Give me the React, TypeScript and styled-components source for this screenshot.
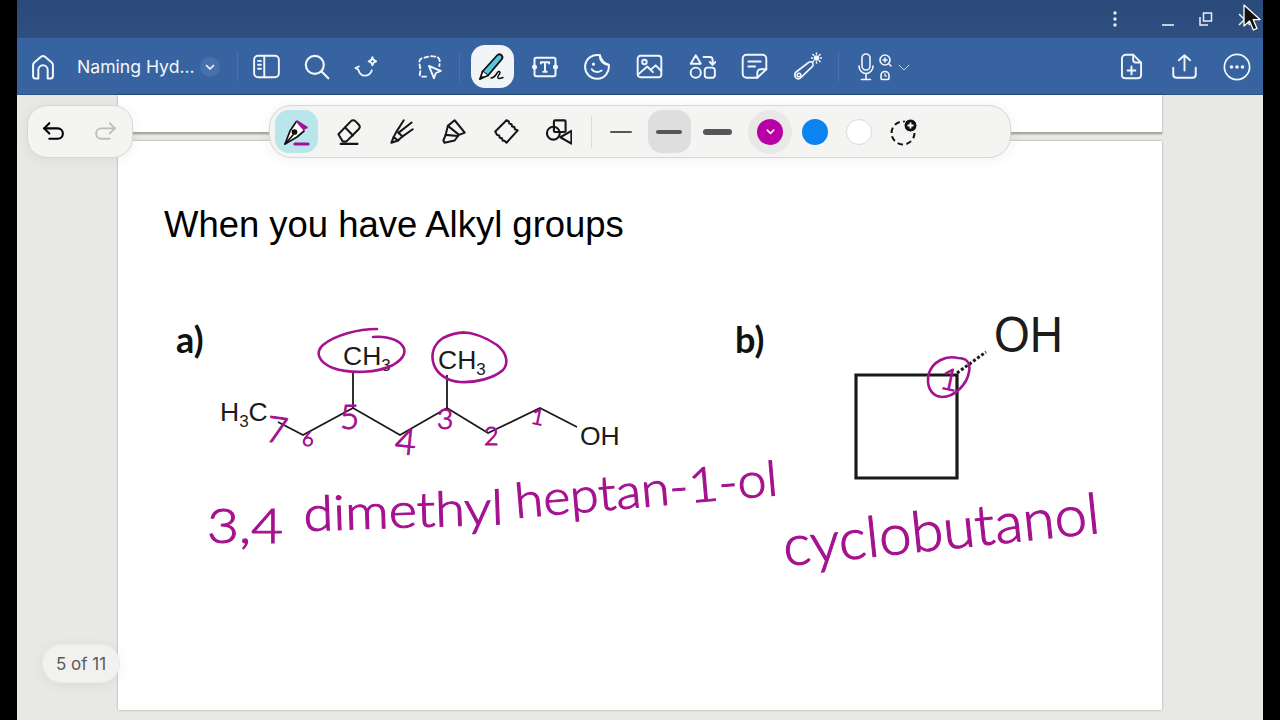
import React from "react";
import styled, { createGlobalStyle } from "styled-components";

const Global = createGlobalStyle`
  html, body {
    margin: 0;
    height: 100%;
    background: #000;
    overflow: hidden;
    font-family: "Inter", "Liberation Sans", sans-serif;
  }
`;

const Stage = styled.div`
  width: 1280px;
  height: 720px;
  padding: 0 17px;
  box-sizing: border-box;
  position: relative;
`;

const Win = styled.div`
  height: 720px;
  display: flex;
  flex-direction: column;
`;

const TitleBar = styled.div`
  height: 38px;
  flex: none;
  display: flex;
  align-items: center;
  justify-content: flex-end;
  background: linear-gradient(#2a4a79, #2e4f80);
  color: #e8eef7;
`;

const WinButton = styled.div<{ $w: number }>`
  width: ${({ $w }) => $w}px;
  height: 38px;
  display: flex;
  align-items: center;
  justify-content: center;
`;

const Toolbar = styled.div`
  height: 57px;
  flex: none;
  box-sizing: border-box;
  padding-top: 1px;
  display: flex;
  align-items: center;
  background: #3764a0;
  border-bottom: 1px solid #2c5285;
  color: #f2f6fb;
`;

const BarButton = styled.div<{ $w?: number; $ml?: number }>`
  width: ${({ $w }) => $w ?? 52.5}px;
  margin-left: ${({ $ml }) => $ml ?? 0}px;
  height: 43px;
  flex: none;
  display: flex;
  align-items: center;
  justify-content: center;
`;

const ActiveTile = styled.div`
  width: 43px;
  height: 43px;
  border-radius: 14px;
  background: #f1f5f8;
  display: flex;
  align-items: center;
  justify-content: center;
`;

const DocTitle = styled.div`
  width: 154px;
  flex: none;
  padding: 0 3px 0 8px;
  box-sizing: border-box;
  display: flex;
  align-items: center;
  justify-content: space-between;
  font-size: 17.6px;
  font-weight: 400;
  white-space: nowrap;
`;

const ChevronBadge = styled.div`
  width: 20px;
  height: 20px;
  border-radius: 50%;
  background: #4671aa;
  display: flex;
  align-items: center;
  justify-content: center;
`;

const BarDivider = styled.div<{ $ml: number }>`
  width: 1px;
  height: 30px;
  flex: none;
  margin-left: ${({ $ml }) => $ml}px;
  background: #4873aa;
`;

const VoiceGroup = styled.div`
  margin-left: 19px;
  display: flex;
  align-items: center;
  gap: 4px;
`;

const RightGroup = styled.div`
  margin-left: auto;
  display: flex;
`;

const Canvas = styled.div`
  flex: 1;
  display: flex;
  flex-direction: column;
  background: #e8e8e4;
  position: relative;
  min-height: 0;
`;

const PageStub = styled.div`
  width: 1044px;
  height: 39px;
  margin-left: 101px;
  flex: none;
  background: #fff;
  border-bottom: 2px solid #a9a9a7;
  box-sizing: border-box;
  box-shadow: 0 0 2px rgba(0, 0, 0, 0.35);
`;

const Page = styled.div`
  width: 1044px;
  height: 569px;
  margin: 7px 0 0 101px;
  flex: none;
  background: #fff;
  box-shadow: 0 0 2px rgba(0, 0, 0, 0.35);
  position: relative;
  box-sizing: border-box;
  padding: 62px 0 0 46px;
`;

const Heading = styled.h1`
  margin: 0;
  font: 400 36.45px/44px "Liberation Sans", Arial, sans-serif;
  color: #000;
`;

const Drawing = styled.svg`
  position: absolute;
  inset: 0;
  width: 1044px;
  height: 569px;
`;

const Formula = styled.text<{ $size: number }>`
  font-family: "Liberation Sans", Arial, sans-serif;
  font-size: ${({ $size }) => $size}px;
  fill: #1c1c1c;
`;

const Label = styled.text`
  font-family: "Lato", "Liberation Sans", sans-serif;
  font-size: 36px;
  font-weight: 700;
  fill: #111;
`;

const Ink = styled.text<{ $size: number }>`
  font-family: "Lato", "Noto Sans", sans-serif;
  font-weight: 300;
  font-size: ${({ $size }) => $size}px;
  fill: #a5128f;
  stroke: #a5128f;
  stroke-width: 1.1px;
`;

const InkLine = styled.path`
  fill: none;
  stroke: #a5128f;
  stroke-width: 2.6;
  stroke-linecap: round;
  stroke-linejoin: round;
`;

const Bond = styled.path<{ $w?: number }>`
  fill: none;
  stroke: #1a1a1a;
  stroke-width: ${({ $w }) => $w ?? 1.8};
`;

const Floating = styled.div`
  position: absolute;
  background: #f4f4f3;
  border: 1px solid #d6d6d4;
  box-sizing: border-box;
  box-shadow: 0 2px 14px rgba(0, 0, 0, 0.06);
`;

const UndoPill = styled(Floating)`
  left: 10px;
  top: 10px;
  width: 106px;
  height: 53px;
  border-radius: 20px;
  display: flex;
  align-items: center;
  justify-content: space-between;
  padding: 0 14px 0 13px;
`;

const RedoArrow = styled.span`
  color: #bdbdbb;
  display: flex;
`;

const Palette = styled(Floating)`
  left: 252px;
  top: 10px;
  width: 742px;
  height: 53px;
  border-radius: 22px;
  display: flex;
  align-items: center;
  padding-left: 5px;
  color: #161616;
`;

const ToolRow = styled.div`
  display: flex;
  gap: 9.4px;
`;

const ToolTile = styled.div<{ $active?: boolean }>`
  width: 43px;
  height: 43px;
  border-radius: 14px;
  background: ${({ $active }) => ($active ? "#b9e6eb" : "transparent")};
  display: flex;
  align-items: center;
  justify-content: center;
`;

const PaletteDivider = styled.div`
  width: 1px;
  height: 32px;
  margin-left: 11px;
  background: #dcdcda;
`;

const WidthRow = styled.div`
  margin-left: 8px;
  display: flex;
  gap: 5px;
`;

const WidthTile = styled.div<{ $active?: boolean }>`
  width: 43px;
  height: 43px;
  border-radius: 14px;
  background: ${({ $active }) => ($active ? "#dedede" : "transparent")};
  display: flex;
  align-items: center;
  justify-content: center;
`;

const WidthBar = styled.div<{ $w: number; $h: number }>`
  width: ${({ $w }) => $w}px;
  height: ${({ $h }) => $h}px;
  border-radius: ${({ $h }) => $h / 2}px;
  background: #565656;
`;

const SwatchRow = styled.div`
  margin-left: 9.5px;
  display: flex;
  gap: 0.5px;
`;

const SwatchSlot = styled.div<{ $active?: boolean }>`
  width: 44px;
  height: 44px;
  border-radius: 50%;
  background: ${({ $active }) => ($active ? "#e8e8e6" : "transparent")};
  display: flex;
  align-items: center;
  justify-content: center;
`;

const Swatch = styled.div<{ $color: string; $ring?: boolean }>`
  width: 26px;
  height: 26px;
  border-radius: 50%;
  box-sizing: border-box;
  background: ${({ $color }) => $color};
  border: ${({ $ring }) => ($ring ? "1px solid #dcdcdc" : "none")};
  display: flex;
  align-items: center;
  justify-content: center;
  color: #fff;
`;

const PageCount = styled(Floating)`
  left: 25px;
  top: 549px;
  width: 78px;
  height: 39px;
  border-radius: 20px;
  border-color: #ecece9;
  background: #f1f1ef;
  display: flex;
  align-items: center;
  justify-content: center;
  font-size: 17px;
  color: #5a5a5a;
`;

const Cursor = styled.svg`
  position: absolute;
  left: 1241px;
  top: 3px;
`;

type IconProps = { size?: number; sw?: number; children: React.ReactNode };

const Icon = ({ size = 26, sw = 1.9, children }: IconProps) => (
  <svg
    width={size}
    height={size}
    viewBox="0 0 24 24"
    fill="none"
    stroke="currentColor"
    strokeWidth={sw}
    strokeLinecap="round"
    strokeLinejoin="round"
  >
    {children}
  </svg>
);

const Chevron = ({ size = 12 }: { size?: number }) => (
  <Icon size={size} sw={3.4}>
    <path d="M5 9l7 7 7-7" />
  </Icon>
);

export default function App() {
  return (
    <Stage>
      <Global />
      <Win>
        <TitleBar>
          <WinButton $w={66}>
            <svg width="4" height="16" viewBox="0 0 4 16" fill="currentColor">
              <circle cx="2" cy="2" r="1.7" />
              <circle cx="2" cy="8" r="1.7" />
              <circle cx="2" cy="14" r="1.7" />
            </svg>
          </WinButton>
          <WinButton $w={39}>
            <svg width="14" height="14" viewBox="0 0 14 14" stroke="currentColor" strokeWidth="1.6" fill="none">
              <path d="M1 13h12" />
            </svg>
          </WinButton>
          <WinButton $w={38}>
            <svg width="14" height="14" viewBox="0 0 14 14" stroke="currentColor" strokeWidth="1.5" fill="none">
              <rect x="4.5" y="1" width="8" height="8" />
              <path d="M1 5v8h8" />
            </svg>
          </WinButton>
          <WinButton $w={38}>
            <svg width="13" height="13" viewBox="0 0 13 13" stroke="currentColor" strokeWidth="1.5" fill="none">
              <path d="M1 1l11 11M12 1L1 12" />
            </svg>
          </WinButton>
        </TitleBar>

        <Toolbar>
          <BarButton $w={52}>
            <Icon size={28} sw={1.7}>
              <path d="M3.5 20V10.4c0-.9.4-1.6 1-2.2l5.8-5c1-.8 2.4-.8 3.4 0l5.8 5c.6.6 1 1.3 1 2.2V20c0 1-.8 1.8-1.8 1.8H16V14.5c0-2.2-1.8-4-4-4s-4 1.8-4 4v7.3H5.3c-1 0-1.8-.8-1.8-1.8z" />
            </Icon>
          </BarButton>
          <DocTitle>
            Naming Hyd...
            <ChevronBadge>
              <Chevron />
            </ChevronBadge>
          </DocTitle>
          <BarDivider $ml={14} />
          <BarButton $w={50} $ml={3.5}>
            <Icon size={27} sw={1.7}>
              <rect x="1" y="2.5" width="22" height="19" rx="3.5" />
              <path d="M10 2.5v19M4.5 7h2.5M4.5 10.5h2.5M4.5 14h2.5" />
            </Icon>
          </BarButton>
          <BarButton $w={50}>
            <Icon size={27} sw={1.9}>
              <circle cx="10.5" cy="10.5" r="8" />
              <path d="M16.5 16.5l6 6" />
            </Icon>
          </BarButton>
          <BarButton $w={50}>
            <Icon size={26} sw={1.7}>
              <path d="M1.5 13l2.5 1.5c1 3.5 3 5.5 6 5.5 3 0 5.5-2 6.5-5" />
              <path d="M1.5 13l3-1.5" />
              <path d="M17 3c.4 2.500 1.200 3.300 3.500 3.800-2.300.5-3.100 1.300-3.500 3.700-.4-2.400-1.200-3.200-3.500-3.700 2.300-.5 3.100-1.300 3.500-3.800z" />
            </Icon>
          </BarButton>
          <BarButton $w={50} $ml={13}>
            <Icon size={27} sw={1.7}>
              <path d="M9 21H5.500c-1.500 0-2.500-1-2-2.500l.5-3.500-1-6c-.3-2 .5-4 3-4.500 3-.5 6-2 9.500-1.500 3 .2 5 .8 5.500 3.500.3 2-.2 3.500-.2 5" strokeDasharray="3.500 2.600" />
              <path d="M11.500 11.500l10.500 4.500-4.500 2-1.500 4.500z" />
            </Icon>
          </BarButton>
          <BarDivider $ml={4.5} />
          <BarButton $ml={5.75}>
            <ActiveTile>
              <svg width="33" height="33" viewBox="0 0 33 33" fill="none" stroke="#111" strokeWidth="1.8" strokeLinecap="round" strokeLinejoin="round">
                <path d="M6.500 21.500L21 5.500c1.200-1.300 3-1.500 4.300-.5 1.300 1.200 1.500 3 .3 4.300L12 25.500z" fill="#5ac6dc" />
                <path d="M6.500 21.500L4 29l8-3.500" fill="#fff" />
                <path d="M4 29l3-2" />
                <path d="M15 28c3 0 5-3 6.500-5.500 1-1.800 3-1.200 2.300.8-.7 1.900-2.800 3.300-1.800 4.700 1 1.200 3.500 0 5-.5" strokeWidth="1.500" />
              </svg>
            </ActiveTile>
          </BarButton>
          <BarButton>
            <Icon size={28} sw={1.7}>
              <rect x="3" y="4" width="18" height="16" rx="1.500" />
              <path d="M8.500 9V8h7v1M12 8v8M10.500 16h3" />
              <circle cx="3" cy="12" r="1.300" fill="currentColor" />
              <circle cx="21" cy="12" r="1.300" fill="currentColor" />
            </Icon>
          </BarButton>
          <BarButton>
            <Icon size={28} sw={1.7}>
              <path d="M14.500 2a10.200 10.200 0 1 0 7.500 8c-4 .5-8-3.500-7.500-8z" />
              <path d="M14.500 2c1 4 3.500 7 7.500 8" />
              <path d="M7.500 14c1.500 2.500 5.500 3 8.500 1" />
              <path d="M9 9.500v.1" strokeWidth="2.600" />
            </Icon>
          </BarButton>
          <BarButton>
            <Icon size={27} sw={1.7}>
              <rect x="1.500" y="2.500" width="21" height="19" rx="2.500" />
              <circle cx="7.500" cy="8" r="2" />
              <path d="M2 19l8-7 5 5M13 15l4.500-4 5 5" />
            </Icon>
          </BarButton>
          <BarButton>
            <Icon size={27} sw={1.7}>
              <path d="M6 2L10.500 9.500H1.500z" />
              <circle cx="6" cy="17.500" r="4.500" />
              <rect x="14" y="13" width="9" height="9" rx="2.500" />
              <path d="M13 3.500h5.500c1.500 0 2.500 1 2.500 2.500v4M18.500 8l2.500 2.500 2.500-2.500" />
            </Icon>
          </BarButton>
          <BarButton>
            <Icon size={27} sw={1.7}>
              <path d="M14.500 22H5c-2 0-3.500-1.500-3.500-3.500V5C1.500 3 3 1.500 5 1.500h14c2 0 3.500 1.500 3.500 3.500v9.500z" />
              <path d="M14.500 22v-4.500c0-1.700 1.300-3 3-3h5" />
              <path d="M6.500 7.500h11M6.500 12h6" />
            </Icon>
          </BarButton>
          <BarButton>
            <svg width="30" height="30" viewBox="0 0 30 30" fill="none" stroke="currentColor" strokeWidth="1.600" strokeLinecap="round" strokeLinejoin="round">
              <path d="M3.500 20.500l13-10c1.500-1 3-.8 4 .3 1 1.200.8 3-.5 4l-11.500 11c-1.500 1.200-3.500 1.200-4.700 0-1.200-1.500-1.200-3.800-.3-5.300z" />
              <circle cx="7" cy="23" r="1.800" />
              <circle cx="24.500" cy="6" r="2" fill="currentColor" />
              <path d="M24.500 1v1M24.500 10v1M19.500 6h1M28.500 6h1M21 2.500l.7.7M27.300 8.800l.7.700M28 2.500l-.7.7M21.700 8.800l-.7.700" />
            </svg>
          </BarButton>
          <BarDivider $ml={4.5} />
          <VoiceGroup>
            <svg width="36" height="28" viewBox="0 0 36 28" fill="none" stroke="currentColor" strokeWidth="1.600" strokeLinecap="round" strokeLinejoin="round">
              <rect x="4" y="1" width="8" height="16" rx="4" />
              <path d="M1 13c0 4 3 7.500 7 7.500s7-3.500 7-7.500M8 20.500V26M3.500 26.500h9" />
              <circle cx="27" cy="7" r="5" />
              <path d="M25 7h4M27 5v4M31 11l2 2" />
              <path d="M23 25v-2.500a4 4 0 0 1 8 0V25a1.500 1.500 0 0 1-1.500 1.500h-5A1.500 1.500 0 0 1 23 25z" />
              <path d="M27 20.500v2.500h1.500" strokeWidth="1.100" />
            </svg>
            <Icon size={12} sw={1.500}>
              <path d="M2 8l10 10 10-10" />
            </Icon>
          </VoiceGroup>
          <RightGroup>
            <BarButton>
              <Icon size={27} sw={1.700}>
                <path d="M13.500 1.500H7C5 1.500 3.500 3 3.500 5v14.500c0 2 1.500 3 3.500 3h10c2 0 3.500-1 3.500-3V8.500z" />
                <path d="M13.500 1.500V6c0 1.500 1 2.500 2.500 2.500h4.500" />
                <path d="M8.500 15.500h7M12 12v7" />
              </Icon>
            </BarButton>
            <BarButton>
              <Icon size={27} sw={1.700}>
                <path d="M12 15.500V2M7 6.500L12 2l5 4.500" />
                <path d="M2 13v6c0 1.800 1.200 3 3 3h14c1.800 0 3-1.200 3-3v-6" />
              </Icon>
            </BarButton>
            <BarButton>
              <svg width="28" height="28" viewBox="0 0 28 28" fill="none" stroke="currentColor" strokeWidth="1.700">
                <circle cx="14" cy="14" r="12.600" />
                <circle cx="8.500" cy="14" r="1.800" fill="currentColor" stroke="none" />
                <circle cx="14" cy="14" r="1.800" fill="currentColor" stroke="none" />
                <circle cx="19.500" cy="14" r="1.800" fill="currentColor" stroke="none" />
              </svg>
            </BarButton>
          </RightGroup>
        </Toolbar>

        <Canvas>
          <PageStub />
          <Page>
            <Heading>When you have Alkyl groups</Heading>
            <Drawing viewBox="118 141 1044 569">
              <Label x="176" y="353">a)</Label>
              <Label x="735" y="353">b)</Label>

              <Bond d="M278 422L303 435L353 408L400 435L447 408L488 433L540 408L577 427" />
              <Bond d="M353 372V408M447 375V408" />
              <Formula $size={26.5} x="220" y="421">H<tspan dy="6" fontSize="17">3</tspan><tspan dy="-6">C</tspan></Formula>
              <Formula $size={26.5} x="343" y="365">CH<tspan dy="6" fontSize="17">3</tspan></Formula>
              <Formula $size={26.5} x="438" y="369">CH<tspan dy="6" fontSize="17">3</tspan></Formula>
              <Formula $size={26.5} x="580" y="445">OH</Formula>

              <Bond $w={3.2} d="M856 375H957V478H856Z" />
              <Bond $w={3} d="M957 373L986 352" strokeDasharray="3 2" />
              <Formula $size={50} x="994" y="352" textLength={69} lengthAdjust="spacingAndGlyphs">OH</Formula>

              <InkLine d="M377 329C358 329 335 335 323 345C315 352 318 362 333 368C350 374 378 373 393 365C405 358 408 350 400 343C394 338 382 336 373 337" />
              <InkLine d="M457 333C470 331 485 337 497 345C507 353 509 363 503 370C494 378 476 383 460 382C446 381 437 373 434 365C430 354 434 344 443 338C451 334 462 332 470 333" />
              <InkLine d="M958 358C945 355 933 362 929 373C926 385 930 396 942 397C955 397 967 384 969 372C971 362 966 358 958 358" />

              <Ink $size={36} x="265" y="441" transform="rotate(8 265 441)">7</Ink>
              <Ink $size={20} x="302" y="446">6</Ink>
              <Ink $size={33} x="340" y="429">5</Ink>
              <Ink $size={36} x="394" y="453" transform="rotate(6 394 453)">4</Ink>
              <Ink $size={28} x="437" y="429">3</Ink>
              <Ink $size={25} x="484" y="445">2</Ink>
              <Ink $size={22} x="530" y="423" transform="rotate(12 530 423)">1</Ink>
              <Ink $size={30} x="939" y="388" transform="rotate(12 939 388)">1</Ink>

              <Ink $size={48} x="207" y="543" textLength={76} lengthAdjust="spacingAndGlyphs">3,4</Ink>
              <Ink $size={48} x="304" y="531" textLength={200} lengthAdjust="spacingAndGlyphs" transform="rotate(-2 304 531)">dimethyl</Ink>
              <Ink $size={48} x="516" y="518" textLength={264} lengthAdjust="spacingAndGlyphs" transform="rotate(-5 516 518)">heptan-1-ol</Ink>
              <Ink $size={56} x="785" y="566" textLength={318} lengthAdjust="spacingAndGlyphs" transform="rotate(-6 785 566)">cyclobutanol</Ink>
            </Drawing>
          </Page>

          <UndoPill>
            <Icon size={25} sw={2}>
              <path d="M8 4L3 9l5 5" />
              <path d="M3 9h13c3 0 5 2.200 5 5s-2 5-5 5H8" />
            </Icon>
            <RedoArrow>
              <Icon size={25} sw={1.800}>
                <path d="M16 4l5 5-5 5" />
                <path d="M21 9H8c-3 0-5 2.200-5 5s2 5 5 5h8" />
              </Icon>
            </RedoArrow>
          </UndoPill>

          <Palette>
            <ToolRow>
              <ToolTile $active>
                <svg width="30" height="30" viewBox="0 0 30 30" fill="none" stroke="#111" strokeWidth="1.700" strokeLinejoin="round" strokeLinecap="round">
                  <path d="M15 4l10 6.500-5 2.500z" fill="#a3109a" stroke="#a3109a" />
                  <path d="M14 5L8 14 3 27l12-7 7-6" fill="#fff" />
                  <circle cx="12.500" cy="15" r="2" fill="#111" />
                  <path d="M3 27l8-9" />
                  <path d="M13 27h13" stroke="#a3109a" strokeWidth="3.200" />
                </svg>
              </ToolTile>
              <ToolTile>
                <Icon size={27} sw={1.800}>
                  <path d="M3 14.500L14 3c1.300-1.300 3-1.300 4.300 0l2.700 2.700c1.200 1.200 1.200 3 0 4.300L10 21H7z" />
                  <path d="M9 8.500l7 7" />
                  <path d="M5 23h15" />
                </Icon>
              </ToolTile>
              <ToolTile>
                <Icon size={27} sw={1.800}>
                  <path d="M14 2L7 13l-2 4-2 5 6-2 3-3 10-7" />
                  <path d="M5 17l4 3" />
                  <path d="M9.500 13L21 4M13 16.500l-4-3.500" />
                </Icon>
              </ToolTile>
              <ToolTile>
                <Icon size={27} sw={1.800}>
                  <path d="M13 2l9 11-5 2-10-8z" />
                  <path d="M7 7l-2 8 11 1-.2 0" />
                  <path d="M5 15l-2 5 1 2 9-2 3-4" />
                </Icon>
              </ToolTile>
              <ToolTile>
                <Icon size={27} sw={1.800}>
                  <path d="M2 12L12 2l2 1 .5 2 2 .5.5 2 2 .5.500 2 2.500 1L12 22l-1.500-1.500-2-.5-.5-2-2-.5-.5-2-2-.5z" />
                </Icon>
              </ToolTile>
              <ToolTile>
                <Icon size={28} sw={1.800}>
                  <rect x="8.500" y="2" width="10" height="10" rx="1" />
                  <circle cx="8" cy="13" r="5.500" />
                  <path d="M23.500 11v11L14 16.500z" fill="#f4f4f3" />
                </Icon>
              </ToolTile>
            </ToolRow>
            <PaletteDivider />
            <WidthRow>
              <WidthTile>
                <WidthBar $w={22} $h={2} />
              </WidthTile>
              <WidthTile $active>
                <WidthBar $w={26} $h={4} />
              </WidthTile>
              <WidthTile>
                <WidthBar $w={29} $h={6} />
              </WidthTile>
            </WidthRow>
            <SwatchRow>
              <SwatchSlot $active>
                <Swatch $color="#b800a6">
                  <Chevron size={11} />
                </Swatch>
              </SwatchSlot>
              <SwatchSlot>
                <Swatch $color="#0a84f0" />
              </SwatchSlot>
              <SwatchSlot>
                <Swatch $color="#ffffff" $ring />
              </SwatchSlot>
              <SwatchSlot>
                <svg width="28" height="28" viewBox="0 0 28 28" fill="none">
                  <circle cx="13" cy="15" r="11.500" stroke="#111" strokeWidth="2" strokeDasharray="5.500 3.500" />
                  <circle cx="20.500" cy="7.500" r="6.500" fill="#111" stroke="#f4f4f3" strokeWidth="1" />
                  <path d="M17.500 7.500h6M20.500 4.500v6" stroke="#fff" strokeWidth="1.800" />
                </svg>
              </SwatchSlot>
            </SwatchRow>
          </Palette>

          <PageCount>5 of 11</PageCount>
        </Canvas>
      </Win>
      <Cursor width="20" height="32" viewBox="0 0 20 32">
        <path d="M3 2v21l5.500-5 3.800 9 3.700-1.600-3.800-8.800H19z" fill="#111" stroke="#fff" strokeWidth="1.300" strokeLinejoin="round" />
      </Cursor>
    </Stage>
  );
}
